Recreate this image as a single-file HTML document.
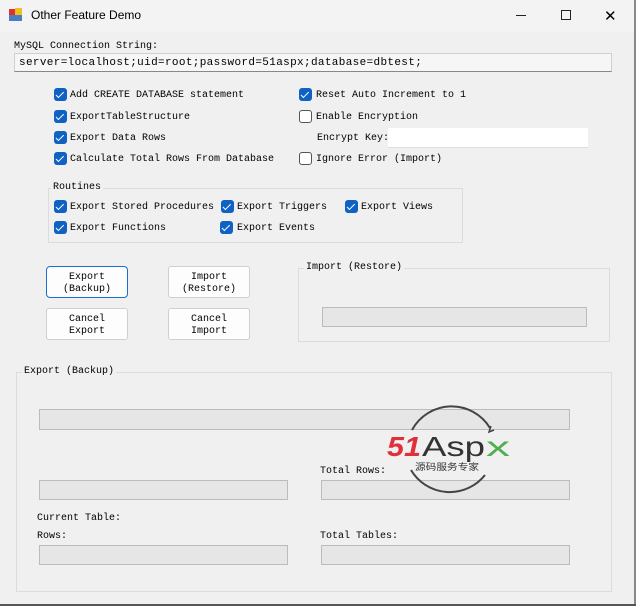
<!DOCTYPE html>
<html><head><meta charset="utf-8"><style>
*{margin:0;padding:0;box-sizing:border-box}
body{width:636px;height:606px;background:#f0f0f0;position:relative;overflow:hidden;font-family:"Liberation Mono","Noto Serif CJK SC",monospace;font-size:10px;color:#000}
.a{position:absolute;white-space:nowrap}
.t{position:absolute;white-space:nowrap;line-height:12px;margin-top:2px}
.cb{position:absolute;width:13px;height:13px;border-radius:3px;background:#0f62c4}
.cb::after{content:"";position:absolute;left:4px;top:1.5px;width:3px;height:6.5px;border:solid #fff;border-width:0 1.5px 1.5px 0;transform:rotate(45deg)}
.cb.off{background:#fff;border:1px solid #555}
.cb.off::after{display:none}
.grp{position:absolute;border:1px solid #dcdcdc}
.lg{position:absolute;background:#f0f0f0;padding:0 2px;line-height:12px;margin-top:1px}
.bar{position:absolute;background:#e6e6e6;border:1px solid #bcbcbc}
.btn{position:absolute;width:82px;height:32px;background:#fdfdfd;border:1px solid #d0d0d0;border-radius:3px;text-align:center;line-height:12px;padding-top:5px}
</style></head><body>
<div class="a" style="left:0;top:0;width:636px;height:32px;background:#f3f3f3"></div>
<div class="a" style="left:9px;top:9px;width:6px;height:6px;background:#d33"></div>
<div class="a" style="left:15px;top:8px;width:7px;height:7px;background:#f0c020"></div>
<div class="a" style="left:9px;top:15px;width:13px;height:6px;background:#4a7ec0"></div>
<div class="a" style="left:31px;top:8px;font-family:'Liberation Sans',sans-serif;font-size:12px">Other Feature Demo</div>
<div class="a" style="left:516px;top:15px;width:10px;height:1px;background:#222"></div>
<div class="a" style="left:561px;top:10px;width:10px;height:10px;border:1px solid #222"></div>
<div class="a" style="left:604px;top:7px;font-family:'Liberation Sans',sans-serif;font-size:15px">✕</div>
<div class="a" style="left:634px;top:0;width:2px;height:606px;background:#888"></div>
<div class="a" style="left:0;top:604px;width:636px;height:2px;background:#555"></div>

<div class="t" style="left:14px;top:39px">MySQL Connection String:</div>
<div class="a" style="left:14px;top:53px;width:598px;height:19px;background:#f6f6f6;border:1px solid #d0d0d0;border-bottom-color:#888"></div>
<div class="t" style="left:19px;top:55px;font-size:11px;letter-spacing:0.35px">server=localhost;uid=root;password=51aspx;database=dbtest;</div>

<div class="cb" style="left:54px;top:88px"></div><div class="t" style="left:70px;top:88px">Add CREATE DATABASE statement</div>
<div class="cb" style="left:54px;top:110px"></div><div class="t" style="left:70px;top:110px">ExportTableStructure</div>
<div class="cb" style="left:54px;top:131px"></div><div class="t" style="left:70px;top:131px">Export Data Rows</div>
<div class="cb" style="left:54px;top:152px"></div><div class="t" style="left:70px;top:152px">Calculate Total Rows From Database</div>
<div class="cb" style="left:299px;top:88px"></div><div class="t" style="left:316px;top:88px">Reset Auto Increment to 1</div>
<div class="cb off" style="left:299px;top:110px"></div><div class="t" style="left:316px;top:110px">Enable Encryption</div>
<div class="t" style="left:317px;top:131px">Encrypt Key:</div>
<div class="a" style="left:388px;top:128px;width:200px;height:20px;background:#fff;border-bottom:1px solid #ddd"></div>
<div class="cb off" style="left:299px;top:152px"></div><div class="t" style="left:316px;top:152px">Ignore Error (Import)</div>

<div class="grp" style="left:48px;top:188px;width:415px;height:55px"></div>
<div class="lg" style="left:51px;top:181px">Routines</div>
<div class="cb" style="left:54px;top:200px"></div><div class="t" style="left:70px;top:200px">Export Stored Procedures</div>
<div class="cb" style="left:221px;top:200px"></div><div class="t" style="left:237px;top:200px">Export Triggers</div>
<div class="cb" style="left:345px;top:200px"></div><div class="t" style="left:361px;top:200px">Export Views</div>
<div class="cb" style="left:54px;top:221px"></div><div class="t" style="left:70px;top:221px">Export Functions</div>
<div class="cb" style="left:220px;top:221px"></div><div class="t" style="left:237px;top:221px">Export Events</div>

<div class="btn" style="left:46px;top:266px;border:1px solid #1a6fc9;border-radius:4px">Export<br>(Backup)</div>
<div class="btn" style="left:168px;top:266px">Import<br>(Restore)</div>
<div class="btn" style="left:46px;top:308px">Cancel<br>Export</div>
<div class="btn" style="left:168px;top:308px">Cancel<br>Import</div>

<div class="grp" style="left:298px;top:268px;width:312px;height:74px"></div>
<div class="lg" style="left:304px;top:261px">Import (Restore)</div>
<div class="bar" style="left:322px;top:307px;width:265px;height:20px"></div>

<div class="grp" style="left:16px;top:372px;width:596px;height:220px"></div>
<div class="lg" style="left:22px;top:365px">Export (Backup)</div>
<div class="bar" style="left:39px;top:409px;width:531px;height:21px"></div>
<div class="bar" style="left:39px;top:480px;width:249px;height:20px"></div>
<div class="bar" style="left:321px;top:480px;width:249px;height:20px"></div>
<div class="bar" style="left:39px;top:545px;width:249px;height:20px"></div>
<div class="bar" style="left:321px;top:545px;width:249px;height:20px"></div>
<div class="t" style="left:320px;top:464px">Total Rows:</div>
<div class="t" style="left:37px;top:511px">Current Table:</div>
<div class="t" style="left:37px;top:529px">Rows:</div>
<div class="t" style="left:320px;top:529px">Total Tables:</div>

<svg class="a" style="left:385px;top:400px" width="130" height="96" viewBox="0 0 130 96">
<path d="M27 30 A45 45 0 0 1 105 28" fill="none" stroke="#444" stroke-width="2"/>
<path d="M106 26 l-2 6 l5 -2" fill="none" stroke="#444" stroke-width="1.5"/>
<path d="M26 70 A45 45 0 0 0 100 75" fill="none" stroke="#444" stroke-width="2"/>
<text x="2" y="56" font-family="Liberation Sans,sans-serif" font-size="28" font-weight="bold" font-style="italic" fill="#e0303a" textLength="34" lengthAdjust="spacingAndGlyphs">51</text>
<text x="37" y="56" font-family="Liberation Sans,sans-serif" font-size="28" fill="#333" textLength="63" lengthAdjust="spacingAndGlyphs">Asp</text>
<text x="101" y="56" font-family="Liberation Sans,sans-serif" font-size="28" fill="#4caf50" textLength="24" lengthAdjust="spacingAndGlyphs">x</text>
<text x="30" y="70" font-family="Noto Sans CJK SC,sans-serif" font-size="9" fill="#333" textLength="64" lengthAdjust="spacingAndGlyphs">源码服务专家</text>
</svg>
</body></html>
